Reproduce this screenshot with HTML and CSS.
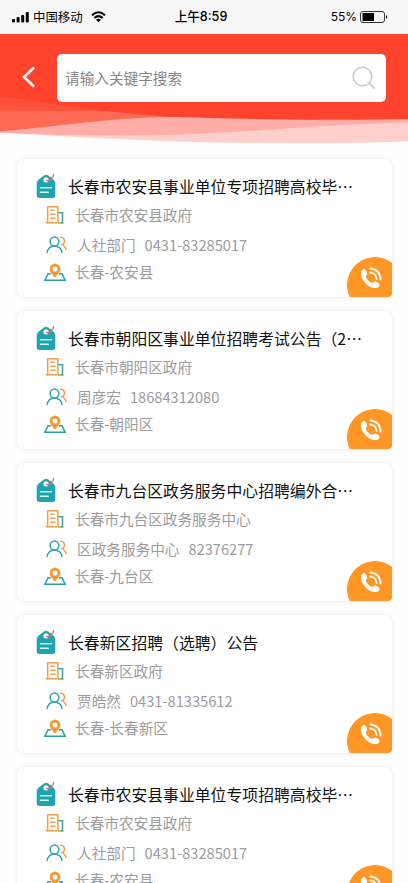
FILE: index.html
```html
<!DOCTYPE html>
<html lang="zh-CN">

<head>
  <meta charset="UTF-8">
  <meta name="viewport" content="width=device-width, initial-scale=1.0">
  <title>招聘信息</title>
  <link rel="stylesheet" href="styles.css">
</head>

<body>
  <!-- 图标 -->
  <svg class="sprite" width="0" height="0">
    <symbol id="tag" viewBox="0 0 20 26">
      <path d="M2.500 6.800 8 2.500Q10 1 12 2.500L17.500 6.800Q19.300 8.300 19.300 10.500V22Q19.300 25 16.300 25H3.700Q.700 25 .700 22V10.500Q.700 8.300 2.500 6.800Z" fill="#1ba5ae" />
      <circle cx="10" cy="6.900" r="2.600" fill="#fff" />
      <path d="M10.200 7.500C14.500 8.300 17.500 5.500 17.500 1M12.500 4.800 15.500 4.200" fill="none" stroke="#e2666b" stroke-width="1.300" />
      <path d="M4.500 14.800H15.300M4.500 19.200H12.300" stroke="#d9f6f6" stroke-width="1.500" stroke-linecap="round" />
    </symbol>
    <symbol id="building" viewBox="0 0 20 20">
      <path d="M2.700 17.500V1.700H12.900V17.500M.700 17.800H14" fill="none" stroke="#f0a04b" stroke-width="1.500" />
      <path d="M5.300 5.300H9.500M5.300 9.300H10.500M5.300 13.200H10.500" stroke="#f0a04b" stroke-width="1.500" />
      <path d="M13.500 7.700H17.500V17.800H14.500" fill="none" stroke="#35a5aa" stroke-width="1.500" />
      <path d="M13 18.200H19" stroke="#f0a04b" stroke-width="1" />
    </symbol>
    <symbol id="people" viewBox="0 0 22 18">
      <path d="M14 1.300C19.500 1 19.500 7.400 16 8.700C18.500 10 20 12 20.300 14.300" fill="none" stroke="#f0a04b" stroke-width="1.500" />
      <circle cx="8.500" cy="5.500" r="4.400" fill="none" stroke="#35a5aa" stroke-width="1.500" />
      <path d="M1.200 17C1.300 12.700 4.500 9.900 8.500 9.900S15.800 12.700 16 17" fill="none" stroke="#35a5aa" stroke-width="1.500" />
    </symbol>
    <symbol id="place" viewBox="0 0 24 19">
      <path d="M8 10.800H5L1.800 17.300H22.200L19 10.800H16" fill="none" stroke="#2ba3a8" stroke-width="1.500" />
      <path d="M12 14.800C9.500 11.300 6.700 9 6.700 5.900A5.300 5.300 0 0 1 17.300 5.900C17.300 9 14.500 11.300 12 14.800Z" fill="#f5982f" />
      <circle cx="12" cy="6" r="2.500" fill="#fff" />
    </symbol>
    <symbol id="phone" viewBox="0 0 22 22">
      <path d="M2 3.200C3.600 1.300 5.200 1.800 6 3.500L7.100 5.800C7.900 7.500 5.900 8.400 6 9.500C6.300 12 9.700 15.500 12.200 15.700C13.300 15.800 14.400 13.700 16 14.600L18.600 16.200C20.200 17.200 19.700 19 18.200 20.200C15.400 22.300 9.800 20.400 5.800 16.400C1.500 12.100-.500 6.300 2 3.200Z" fill="#fff" />
      <path d="M10.400 1.500C16.100 1.500 20.600 6.400 20.500 12.500M10.300 5.500C13.700 5.700 16.300 8.400 16.500 11.800" fill="none" stroke="#fff" stroke-width="1.900" stroke-linecap="round" />
    </symbol>
  </svg>

  <!-- 状态栏 -->
  <div class="status">
    <div class="carrier">
      <svg width="17" height="11" viewBox="0 0 17 11">
        <rect x="0" y="7" width="3" height="3.500" rx="1" />
        <rect x="4.600" y="5" width="3" height="5.500" rx="1" />
        <rect x="9.200" y="3" width="3" height="7.500" rx="1" />
        <rect x="13.800" y="0" width="3" height="10.500" rx="1" />
      </svg>
      <span>中国移动</span>
      <svg class="wifi" width="15" height="12" viewBox="0 0 15 12">
        <path d="M1 4.300Q7.500-1.700 14 4.300M3.300 7Q7.500 3.200 11.700 7" fill="none" stroke="#000" stroke-width="2" />
        <path d="M5 8.700Q7.500 6.800 10 8.700L7.500 11.300Z" />
      </svg>
    </div>
    <div class="time">上午8:59</div>
    <div class="power">
      <span>55%</span>
      <svg width="28" height="12" viewBox="0 0 28 12">
        <rect x=".5" y=".5" width="24" height="11" rx="2.500" fill="none" stroke="#333" />
        <rect x="2.500" y="2" width="11.500" height="8" />
        <path d="M26 4Q28.500 6 26 8Z" />
      </svg>
    </div>
  </div>

  <!-- 搜索 -->
  <div class="header">
    <svg class="wave" width="408" height="115" viewBox="0 0 408 115">
      <path d="M0 0H408V107.500C270 112 150 108 0 98.500Z" fill="#ffd0cb" />
      <path d="M0 0H408V88.500C340 90 300 94 233 98C150 103 70 102 0 98.500Z" fill="#ffada6" />
      <path d="M0 0H408V85L167 82.700C100 85 60 92 0 97.500Z" fill="#ff6b56" />
      <path d="M0 0H408V85L167 82.700C145 78 120 76.700 85 76.700H0Z" fill="#ff513b" />
      <path d="M0 0H408V85C320 87 230 85 167 82.500C90 77 50 69 0 62Z" fill="#ff432d" />
    </svg>
    <div class="bar">
      <svg class="back" width="14" height="22" viewBox="0 0 14 22">
        <path d="M12 1.500 2 11 12 20.500" fill="none" stroke="#fff" stroke-width="2.500" />
      </svg>
      <div class="search">
        <span>请输入关键字搜索</span>
        <svg width="24" height="24" viewBox="0 0 24 24">
          <circle cx="10.500" cy="10.500" r="9.300" fill="none" stroke="#c9c8ce" stroke-width="1.500" />
          <path d="M17 17 22.500 22.700" stroke="#c9c8ce" stroke-width="1.700" />
        </svg>
      </div>
    </div>
  </div>

  <!-- 列表 -->
  <div class="list">
    <div class="card">
      <div class="title"><svg class="tag"><use href="#tag" /></svg>长春市农安县事业单位专项招聘高校毕⋯</div>
      <div class="row unit"><svg><use href="#building" /></svg>长春市农安县政府</div>
      <div class="row contact"><svg><use href="#people" /></svg>人社部门<span>0431-83285017</span></div>
      <div class="row place"><svg><use href="#place" /></svg>长春-农安县</div>
      <div class="call"><svg><use href="#phone" /></svg></div>
    </div>
    <div class="card">
      <div class="title"><svg class="tag"><use href="#tag" /></svg>长春市朝阳区事业单位招聘考试公告（2⋯</div>
      <div class="row unit"><svg><use href="#building" /></svg>长春市朝阳区政府</div>
      <div class="row contact"><svg><use href="#people" /></svg>周彦宏<span>18684312080</span></div>
      <div class="row place"><svg><use href="#place" /></svg>长春-朝阳区</div>
      <div class="call"><svg><use href="#phone" /></svg></div>
    </div>
    <div class="card">
      <div class="title"><svg class="tag"><use href="#tag" /></svg>长春市九台区政务服务中心招聘编外合⋯</div>
      <div class="row unit"><svg><use href="#building" /></svg>长春市九台区政务服务中心</div>
      <div class="row contact"><svg><use href="#people" /></svg>区政务服务中心<span>82376277</span></div>
      <div class="row place"><svg><use href="#place" /></svg>长春-九台区</div>
      <div class="call"><svg><use href="#phone" /></svg></div>
    </div>
    <div class="card">
      <div class="title"><svg class="tag"><use href="#tag" /></svg>长春新区招聘（选聘）公告</div>
      <div class="row unit"><svg><use href="#building" /></svg>长春新区政府</div>
      <div class="row contact"><svg><use href="#people" /></svg>贾皓然<span>0431-81335612</span></div>
      <div class="row place"><svg><use href="#place" /></svg>长春-长春新区</div>
      <div class="call"><svg><use href="#phone" /></svg></div>
    </div>
    <div class="card">
      <div class="title"><svg class="tag"><use href="#tag" /></svg>长春市农安县事业单位专项招聘高校毕⋯</div>
      <div class="row unit"><svg><use href="#building" /></svg>长春市农安县政府</div>
      <div class="row contact"><svg><use href="#people" /></svg>人社部门<span>0431-83285017</span></div>
      <div class="row place"><svg><use href="#place" /></svg>长春-农安县</div>
      <div class="call"><svg><use href="#phone" /></svg></div>
    </div>
  </div>
</body>

</html>
```

FILE: styles.css
```css
* {
  box-sizing: border-box;
}

body {
  margin: 0;
  height: 883px;
  overflow: hidden;
  background-color: #fefefe;
  font-family: "Noto Sans CJK SC", sans-serif;
}

svg {
  flex: none;
}

.sprite {
  position: absolute;
}

.status {
  display: grid;
  grid-template-columns: 1fr auto 1fr;
  align-items: center;
  height: 34px;
  padding: 0 20px 0 12px;
  background-color: #f7f7f7;
  font-size: 12.4px;
  line-height: 34px;
}

.carrier,
.power {
  display: flex;
  align-items: center;
}

.carrier {
  gap: 4px;
}

.wifi {
  margin-left: 4px;
}

.time {
  padding-left: 2px;
  font-family: Inter, "Noto Sans CJK SC", sans-serif;
  font-size: 12.6px;
  font-weight: 500;
}

.power {
  justify-content: flex-end;
  gap: 3px;
  font-family: Inter, sans-serif;
  font-size: 12px;
}

.header {
  position: relative;
  height: 125px;
}

.wave {
  position: absolute;
  top: 0;
  left: 0;
}

.bar {
  position: relative;
  display: flex;
  align-items: center;
  padding: 20px 22px 0;
}

.back {
  margin-bottom: 2px;
}

.search {
  display: flex;
  align-items: center;
  justify-content: space-between;
  flex: 1;
  height: 48px;
  margin-left: 21px;
  padding: 0 10px 0 8px;
  border-radius: 5px;
  background-color: #fff;
  color: #858585;
  font-size: 14.65px;
}

.search span {
  margin-bottom: 1px;
}

.list {
  display: flex;
  flex-direction: column;
  gap: 14px;
  padding: 0 16px 0 17px;
}

.card {
  position: relative;
  flex: none;
  height: 138px;
  padding-top: 13px;
  border-radius: 7px;
  background-color: #fff;
  box-shadow: 0 0 5px rgba(0, 0, 0, 0.1);
}

.title {
  display: flex;
  align-items: center;
  height: 28px;
  padding-left: 19px;
  color: #111;
  font-size: 15.85px;
  white-space: nowrap;
}

.tag {
  width: 20px;
  height: 26px;
  margin-right: 12px;
}

.row {
  display: flex;
  align-items: center;
  height: 28px;
  padding-left: 27px;
  color: #9c9c9c;
  font-size: 14.65px;
  white-space: nowrap;
}

.row span {
  margin-left: 9px;
}

.unit svg {
  width: 20px;
  height: 20px;
  margin: 2px 10px 0 1px;
}

.contact {
  height: 32px;
}

.contact svg {
  width: 22px;
  height: 18px;
  margin: 2px 9px 0 2px;
}

.place {
  height: 22px;
}

.place svg {
  width: 24px;
  height: 19px;
  margin: 2px 8px 0 -1px;
}

/* 右下角拨号按钮 */
.call {
  position: absolute;
  right: 0;
  bottom: 0;
  width: 45px;
  height: 40px;
  overflow: hidden;
  border-radius: 0 0 4px 0;
  background: radial-gradient(circle at 28px 28px, #ff9727 27.5px, transparent 28.2px);
}

.call svg {
  width: 22px;
  height: 22px;
  margin: 10px 0 0 13px;
}
```
